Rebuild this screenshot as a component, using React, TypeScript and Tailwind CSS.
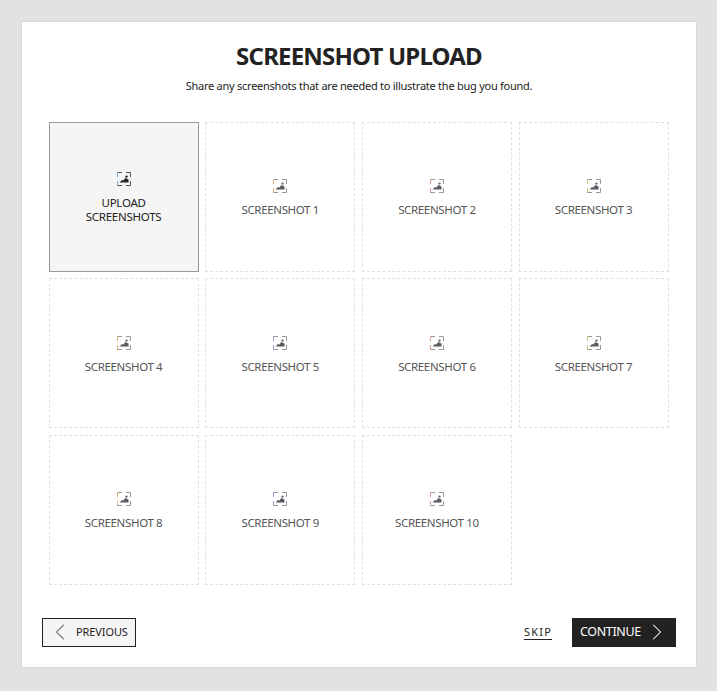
import React from 'react';
import { ChevronLeft, ChevronRight } from 'lucide-react';

const ImageIcon: React.FC<{ dark?: boolean; tint: string }> = ({ dark, tint }) => (
  <svg width="14" height="14" viewBox="0 0 14 14" fill="none" className="block">
    <path d="M0.5 5V0.5H5M9 0.5H13.5V5M13.5 9V13.5H9M5 13.5H0.5V9" stroke={dark ? '#555' : '#999'} strokeWidth="1" />
    <path d="M0.5 5V0.5M0.5 9V13.5" stroke={tint} strokeWidth="1" />
    <path d="M2.5 10.5L5 8L6.5 8.5L8.2 6L11.5 7.5V10.5Z" fill={dark ? '#222' : '#5a5a62'} />
    <circle cx="9.5" cy="4.6" r="1.2" fill={dark ? '#222' : '#6a6f80'} />
  </svg>
);

const tints = ['#e8b27a', '#e89a90', '#c9c97a', '#e0b070', '#8f9fd0', '#e89a90', '#c9c97a', '#e0b070', '#8f9fd0', '#e89a90'];

const Tile: React.FC<{ n: number }> = ({ n }) => (
  <div className="h-[150px] w-[150px] border border-dashed border-[#e0e0e0] flex flex-col items-center pt-[56.3px]">
    <ImageIcon tint={tints[n - 1]} />
    <span className="mt-[10px] text-[11.5px] leading-[14px] text-[#555] tracking-[-0.35px]">SCREENSHOT {n}</span>
  </div>
);

const App: React.FC = () => {
  return (
    <div className="min-h-[691px] bg-[#e2e2e2] p-[22px] font-['Noto_Sans','Liberation_Sans',sans-serif]">
      <div className="h-[645px] w-[674px] bg-white shadow-[0_0_2px_rgba(0,0,0,0.12)] flex flex-col">
        <h1 className="mt-[19px] text-center text-[24px] leading-[30px] font-bold tracking-[-0.8px] text-[#222]">SCREENSHOT UPLOAD</h1>
        <p className="mt-[7px] text-center text-[11px] leading-[16px] tracking-[-0.25px] text-[#222]">
          Share any screenshots that are needed to illustrate the bug you found.
        </p>
        <div className="mt-[28px] ml-[26.6px] w-[621px] grid grid-cols-[repeat(4,150px)] gap-x-[6.67px] gap-y-[6.4px]">
          <div className="h-[150px] w-[150px] border border-[#999] bg-[#f5f5f5] flex flex-col items-center pt-[49px]">
            <ImageIcon dark tint="#7fb0d8" />
            <span className="mt-[10px] text-center text-[11.5px] leading-[14px] tracking-[-0.25px] text-[#222]">
              UPLOAD
              <br />
              SCREENSHOTS
            </span>
          </div>
          {[1, 2, 3, 4, 5, 6, 7, 8, 9, 10].map((n) => (
            <Tile key={n} n={n} />
          ))}
        </div>
        <div className="mt-[33px] mx-[20px] flex items-center justify-between">
          <button className="h-[29px] w-[94px] border border-[#222] bg-[#f5f5f5] flex items-center pl-[2.5px] text-[11px] tracking-[-0.1px] text-[#222]">
            <ChevronLeft size={28} strokeWidth={0.9} className="text-[#555]" />
            <span className="ml-[2.5px]">PREVIOUS</span>
          </button>
          <div className="flex items-center">
            <a className="mr-[20px] text-[11px] tracking-[1.2px] leading-[14px] text-[#222] border-b border-[#222]">SKIP</a>
            <button className="h-[29px] w-[104px] bg-[#222] flex items-center pl-[8px] text-[12.5px] tracking-[-0.35px] text-white">
              <span>CONTINUE</span>
              <ChevronRight size={28} strokeWidth={0.9} className="ml-[2.5px] text-white" />
            </button>
          </div>
        </div>
      </div>
    </div>
  );
};

export default App;
